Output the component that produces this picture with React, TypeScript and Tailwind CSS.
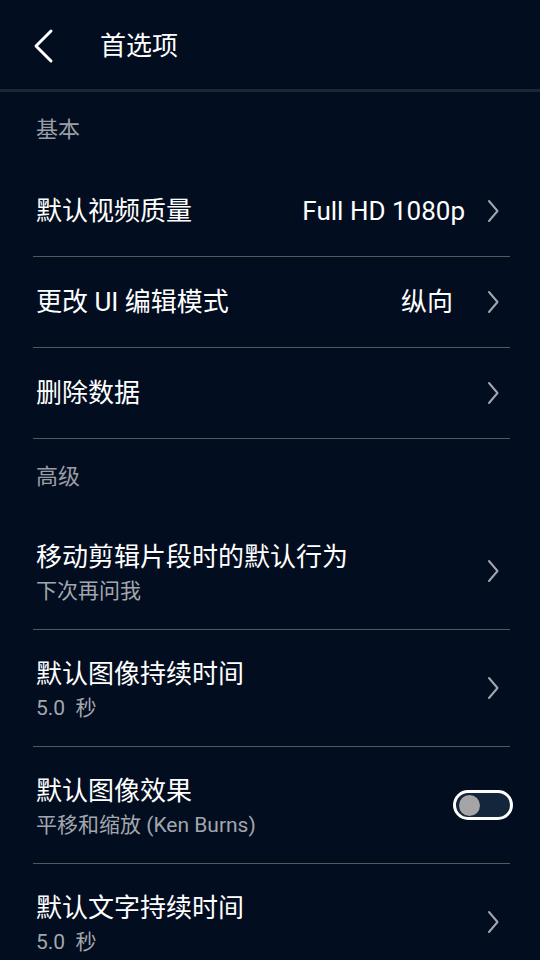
const FONT = "font-['Roboto','Noto_Sans_CJK_SC',sans-serif]";

function Chevron() {
  return (
    <svg width="14" height="24" viewBox="0 0 14 24" className="ml-[2px] shrink-0 text-[#a3a7ad]">
      <path d="M3 2 L11.5 12 L3 22" fill="none" stroke="currentColor" strokeWidth="2" strokeLinecap="round" strokeLinejoin="round" />
    </svg>
  );
}

function Toggle() {
  return (
    <div className="flex h-[30px] w-[60px] items-center rounded-full border-[3px] border-white bg-[#14263b] px-[3px]">
      <div className="h-[21px] w-[21px] rounded-full bg-[#a5a5a7]" />
    </div>
  );
}

function Section({ label }: { label: string }) {
  return (
    <div className="flex h-[74px] items-start px-[3px] pt-[24px] text-[22px] leading-[28px] text-[#9a9ea5]">
      {label}
    </div>
  );
}

function Row({ title, value, cjk }: { title: string; value?: string; cjk?: boolean }) {
  return (
    <div className="flex h-[91px] items-center border-b border-[#55585d] pl-[3px] pr-[10px]">
      <span className="flex-1 text-[26px] text-white">{title}</span>
      {value && (
        <span className={cjk ? "mr-[31px] text-[26px] text-white" : "mr-[19px] text-[26px] text-white"}>
          {value}
        </span>
      )}
      <Chevron />
    </div>
  );
}

function SubRow({ title, sub, toggle }: { title: string; sub: string; toggle?: boolean }) {
  return (
    <div className="flex h-[117px] items-center border-b border-[#55585d] pl-[3px] pr-[10px]">
      <div className="flex flex-1 flex-col pt-[6px]">
        <span className="text-[26px] leading-[34px] text-white">{title}</span>
        <span className="whitespace-pre text-[21px] leading-[34px] text-[#a3a7ad]">{sub}</span>
      </div>
      {toggle ? (
        <div className="-mr-[13px]">
          <Toggle />
        </div>
      ) : (
        <Chevron />
      )}
    </div>
  );
}

export default function App() {
  return (
    <div className={`h-[960px] w-[540px] overflow-hidden bg-[#020d1f] ${FONT}`}>
      <header className="flex h-[92px] items-center border-b-[3px] border-[#1d2733] pl-[32px] pt-[3px]">
        <svg width="22" height="36" viewBox="0 0 22 36" className="text-white">
          <path d="M19 3 L4 18 L19 33" fill="none" stroke="currentColor" strokeWidth="3" strokeLinecap="round" strokeLinejoin="round" />
        </svg>
        <h1 className="ml-[46px] text-[26px] text-white">首选项</h1>
      </header>
      <div className="ml-[33px] mr-[30px]">
        <Section label="基本" />
        <Row title="默认视频质量" value="Full HD 1080p" />
        <Row title="更改 UI 编辑模式" value="纵向" cjk />
        <Row title="删除数据" />
        <Section label="高级" />
        <SubRow title="移动剪辑片段时的默认行为" sub="下次再问我" />
        <SubRow title="默认图像持续时间" sub="5.0  秒" />
        <SubRow title="默认图像效果" sub="平移和缩放 (Ken Burns)" toggle />
        <SubRow title="默认文字持续时间" sub="5.0  秒" />
      </div>
    </div>
  );
}
